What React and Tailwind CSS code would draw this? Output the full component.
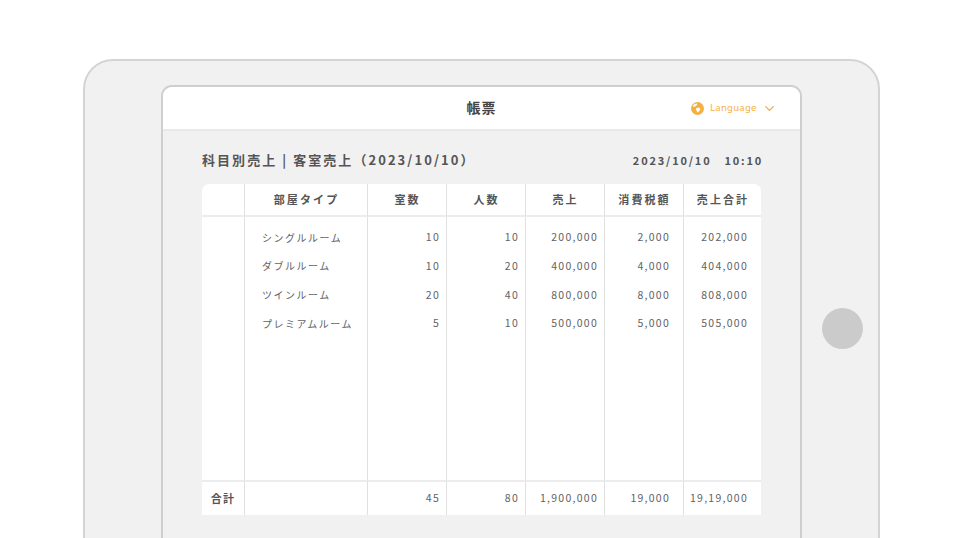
import React from 'react';
import { ChevronDown } from 'lucide-react';

const rows = [
  { name: 'シングルルーム', rooms: '10', people: '10', sales: '200,000', tax: '2,000', total: '202,000' },
  { name: 'ダブルルーム', rooms: '10', people: '20', sales: '400,000', tax: '4,000', total: '404,000' },
  { name: 'ツインルーム', rooms: '20', people: '40', sales: '800,000', tax: '8,000', total: '808,000' },
  { name: 'プレミアムルーム', rooms: '5', people: '10', sales: '500,000', tax: '5,000', total: '505,000' },
];

const headers = ['室数', '人数', '売上', '消費税額', '売上合計'];
const cellLine = 'border-l border-[#e0e0e0]';
const numBase = `${cellLine} p-0 text-right text-[10.5px] tracking-[0.12em] text-[#626262]`;
const numWide = `${numBase} pr-[6px]`;
const numNarrow = `${numBase} pr-[13px]`;
const headCell = `${cellLine} border-b-2 border-b-[#ececec] p-0 pl-px font-bold`;
const footLine = 'border-t-2 border-t-[#ececec]';

const GlobeIcon = () => (
  <svg width="13" height="13" viewBox="0 0 13 13">
    <circle cx="6.5" cy="6.5" r="6.5" fill="#f6b042" />
    <path d="M1.5 4.2C2.6 2.4 4.2 1.4 6 1.4 6.6 2.4 6 3.2 5 3.6 4.6 4.8 3.4 5 2.8 4.6 2.2 4.3 1.8 4.3 1.5 4.2Z" fill="#fff" />
    <path d="M5.4 6.2C6.6 5.4 8.6 5.8 9.2 6.8 9.6 7.8 8.8 8.6 8 9 7.6 10 7 10.6 6.4 10.2 6 9.2 5.8 8.6 5.2 8 4.8 7.2 4.9 6.6 5.4 6.2Z" fill="#fff" />
  </svg>
);

const EmptyCells = () => (
  <>
    <td className="p-0" />
    <td className={`${cellLine} p-0`} />
    {headers.map((h) => (
      <td key={h} className={`${cellLine} p-0`} />
    ))}
  </>
);

const App = () => {
  return (
    <div className="h-[538px] overflow-hidden bg-white pl-[83px] pt-[59px] font-['Noto_Sans_CJK_JP','Noto_Sans',sans-serif]">
      <div className="flex h-[540px] w-[797px] items-start rounded-t-[30px] border-2 border-[#d4d4d4] bg-[#f1f1f1] pl-[76px] pt-[24px]">
        <div className="h-[500px] w-[641px] rounded-t-[11px] border-2 border-[#cfcfcf] bg-[#f1f1f1]">
          <header className="flex h-[44px] items-center justify-between rounded-t-[9px] border-b-2 border-[#e9e9e9] bg-white">
            <div className="w-[150px]" />
            <h1 className="pb-[2px] text-[14px] font-bold tracking-[0.08em] text-[#444444]">帳票</h1>
            <div className="flex w-[150px] items-center pl-[41px] pt-px">
              <GlobeIcon />
              <span className="ml-[6px] font-['Noto_Sans'] text-[9.5px] tracking-[0.03em] text-[#f6b042]">Language</span>
              <ChevronDown className="ml-[5px] text-[#f6b042]" size={15} strokeWidth={2.2} />
            </div>
          </header>

          <div className="flex items-center justify-between pl-[39px] pr-[37px] pt-[18px]">
            <h2 className="text-[13px] font-bold leading-[22px] tracking-[0.158em] text-[#555555]">科目別売上 | 客室売上（2023/10/10）</h2>
            <span className="whitespace-pre text-[11px] font-bold leading-[22px] tracking-[0.165em] text-[#555555]">2023/10/10   10:10</span>
          </div>

          <div className="ml-[39px] mt-[13px] w-[559px] overflow-hidden rounded-t-[7px] bg-white">
            <table className="w-full table-fixed border-separate border-spacing-0">
              <colgroup>
                <col className="w-[42px]" />
                <col className="w-[123px]" />
                <col className="w-[79px]" />
                <col className="w-[79px]" />
                <col className="w-[79px]" />
                <col className="w-[79px]" />
                <col className="w-[78px]" />
              </colgroup>
              <thead>
                <tr className="h-[33px] text-[11px] tracking-[0.19em] text-[#555555]">
                  <th className="border-b-2 border-b-[#ececec] p-0" />
                  <th className={headCell}>部屋タイプ</th>
                  {headers.map((h) => (
                    <th key={h} className={headCell}>{h}</th>
                  ))}
                </tr>
              </thead>
              <tbody>
                <tr className="h-[6px]">
                  <EmptyCells />
                </tr>
                {rows.map((r) => (
                  <tr key={r.name} className="h-[28.67px]">
                    <td className="p-0" />
                    <td className={`${cellLine} p-0 pl-[17px] text-[10px] tracking-[0.15em] text-[#626262]`}>{r.name}</td>
                    <td className={numWide}>{r.rooms}</td>
                    <td className={numWide}>{r.people}</td>
                    <td className={numWide}>{r.sales}</td>
                    <td className={numNarrow}>{r.tax}</td>
                    <td className={numNarrow}>{r.total}</td>
                  </tr>
                ))}
                <tr className="h-[142px]">
                  <EmptyCells />
                </tr>
                <tr className="h-[35px]">
                  <td className={`${footLine} p-0 text-center text-[11px] font-bold tracking-[0.12em] text-[#555555]`}>合計</td>
                  <td className={`${cellLine} ${footLine} p-0`} />
                  <td className={`${numWide} ${footLine}`}>45</td>
                  <td className={`${numWide} ${footLine}`}>80</td>
                  <td className={`${numWide} ${footLine}`}>1,900,000</td>
                  <td className={`${numNarrow} ${footLine}`}>19,000</td>
                  <td className={`${numNarrow} ${footLine}`}>19,19,000</td>
                </tr>
              </tbody>
            </table>
          </div>
        </div>
        <div className="ml-[20px] mt-[223px] h-[41px] w-[41px] rounded-full bg-[#cbcbcb]" />
      </div>
    </div>
  );
};

export default App;
